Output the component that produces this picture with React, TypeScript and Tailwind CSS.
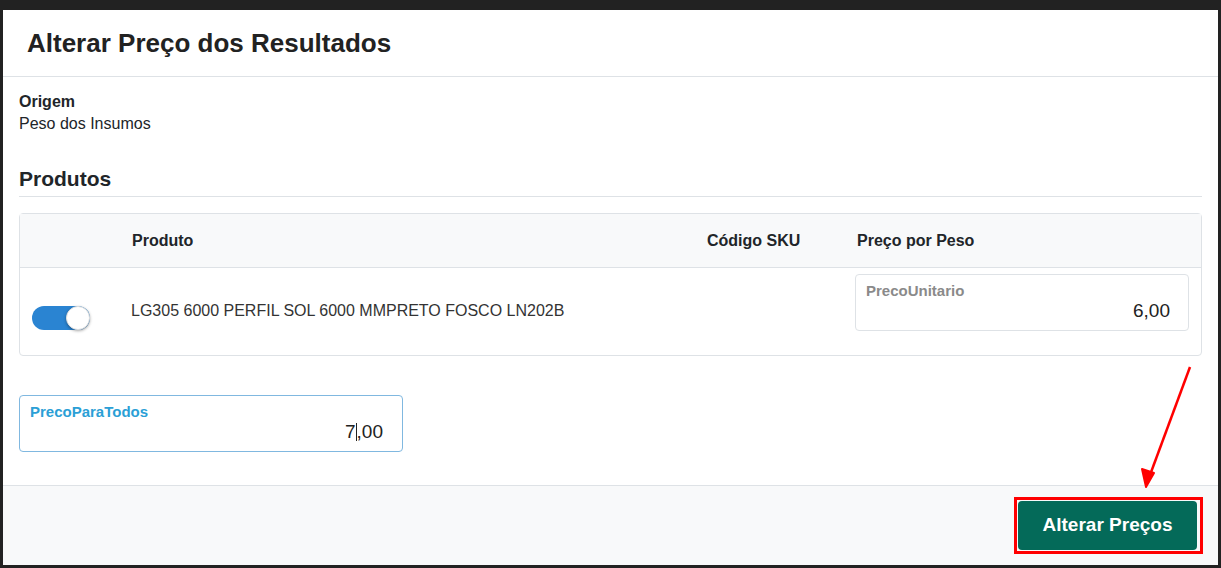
export default function App() {
  return (
    <div className="h-[568px] w-[1221px] bg-[#222222] pt-[10px] px-[3px] pb-[3px] font-['Liberation_Sans',Arial,sans-serif] text-[#212529]">
      <div className="relative flex h-full flex-col bg-white">
        <div className="flex h-[67px] items-center border-b border-[#dee2e6] pl-[24px]">
          <h1 className="text-[26px] font-bold text-[#222]">Alterar Preço dos Resultados</h1>
        </div>

        <div className="flex-1 px-[16px] pt-[14px]">
          <div className="text-[16px] font-bold leading-[22px]">Origem</div>
          <div className="text-[16px] leading-[22px]">Peso dos Insumos</div>

          <div className="mt-[32px] border-b border-[#dee2e6] pb-[5px] text-[21px] font-bold leading-[24px]">Produtos</div>

          <div className="mt-[16px] rounded-[4px] border border-[#dee2e6]">
            <div className="grid h-[54px] grid-cols-[100px_575px_150px_1fr] items-center border-b border-[#dee2e6] bg-[#f8f9fa] text-[16px] font-bold">
              <div />
              <div className="pl-[12px]">Produto</div>
              <div className="pl-[12px]">Código SKU</div>
              <div className="pl-[12px]">Preço por Peso</div>
            </div>
            <div className="grid h-[87px] grid-cols-[100px_575px_150px_1fr] items-start">
              <div className="pl-[12px] pt-[38px]">
                <div className="relative h-[24px] w-[58px] rounded-full bg-[#2a84d2]">
                  <div className="absolute right-0 top-0 h-[24px] w-[24px] rounded-full border border-[#e0e0e0] bg-white shadow-[0_1px_3px_rgba(0,0,0,0.35)]" />
                </div>
              </div>
              <div className="pl-[11px] pt-[32px] text-[16px] leading-[22px] text-[#333]">
                LG305 6000 PERFIL SOL 6000 MMPRETO FOSCO LN202B
              </div>
              <div />
              <div className="pl-[10px] pr-[12px] pt-[6px]">
                <div className="h-[57px] rounded-[4px] border border-[#dee2e6] pl-[10px] pr-[18px] pt-[8px]">
                  <div className="text-[15px] font-bold leading-[16px] text-[#8a8a8a]">PrecoUnitario</div>
                  <div className="text-right text-[19px] leading-[24px] text-[#222]">6,00</div>
                </div>
              </div>
            </div>
          </div>

          <div className="mt-[39px] h-[57px] w-[384px] rounded-[4px] border border-[#80b8e0] px-[10px] pt-[8px]">
            <div className="text-[15px] font-bold leading-[16px] text-[#2b9fd6]">PrecoParaTodos</div>
            <div className="flex justify-end pr-[9px] text-[19px] leading-[24px] text-[#222]">
              <span>7</span>
              <span className="my-[3px] w-px bg-[#222]" />
              <span>,00</span>
            </div>
          </div>
        </div>

        <div className="flex h-[80px] items-center justify-end border-t border-[#dee2e6] bg-[#f8f9fa] pr-[21px]">
          <div className="relative">
            <button className="h-[49px] w-[179px] rounded-[4px] bg-[#046a59] text-[19px] font-bold text-white">
              Alterar Preços
            </button>
            <div className="pointer-events-none absolute -left-[4px] -right-[6px] -top-[4px] -bottom-[4px] border-[3px] border-[#ff0000]" />
          </div>
        </div>

        <svg className="pointer-events-none absolute left-0 top-0" width="1215" height="555" viewBox="0 0 1215 555">
          <line x1="1187" y1="357" x2="1147" y2="465" stroke="#ff0000" strokeWidth="2.5" />
          <polygon points="1143,477 1139,459 1151,463" fill="#ff0000" stroke="#ff0000" strokeWidth="2" strokeLinejoin="round" />
        </svg>
      </div>
    </div>
  );
}
